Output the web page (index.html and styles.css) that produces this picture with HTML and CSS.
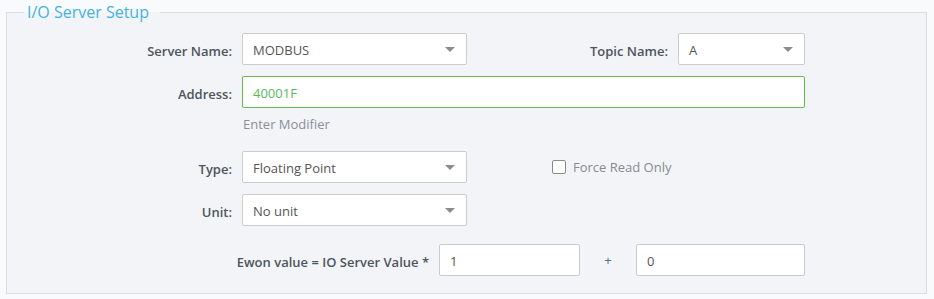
FILE: index.html
```html
<!DOCTYPE html>
<html lang="en">
<head>
    <meta charset="UTF-8">
    <meta name="viewport" content="width=device-width, initial-scale=1.0">
    <title>I/O Server Setup</title>
    <link rel="stylesheet" href="styles.css">
</head>
<body>
    <fieldset class="panel">
        <legend>I/O Server Setup</legend>

        <div class="form-grid">
            <!-- Server / topic -->
            <label class="form-label">Server Name:</label>
            <div class="select">MODBUS<span class="caret"></span></div>
            <label class="form-label">Topic Name:</label>
            <div class="select">A<span class="caret"></span></div>

            <!-- Address -->
            <label class="form-label">Address:</label>
            <div class="text-input valid wide">40001F</div>

            <div></div>
            <div class="help wide">Enter Modifier</div>

            <!-- Type / unit -->
            <label class="form-label">Type:</label>
            <div class="select">Floating Point<span class="caret"></span></div>
            <label class="check">
                <span class="check-box"></span>
                Force Read Only
            </label>

            <label class="form-label">Unit:</label>
            <div class="select">No unit<span class="caret"></span></div>
        </div>

        <div class="scale-row">
            <label class="form-label">Ewon value = IO Server Value *</label>
            <div class="text-input factor">1</div>
            <span class="plus">+</span>
            <div class="text-input offset">0</div>
        </div>
    </fieldset>
</body>
</html>
```

FILE: styles.css
```css
body {
    margin: 0;
    background: #f9fafb;
    font-family: "Open Sans", Arial, sans-serif;
    font-size: 13px;
    color: #555;
}
.panel {
    margin: 0 7px 0 6px;
    padding: 9px 0 17px 0;
    background: #f3f4f8;
    border: 1px solid #dcdde2;
    min-width: 0;
}
.panel legend {
    margin-left: 17px;
    padding: 0 11px 0 3px;
    font-size: 16px;
    line-height: 24px;
    color: #41b3e0;
}
.form-grid {
    display: grid;
    grid-template-columns: 225px 225px 1fr 127px;
    grid-template-rows: 32px 32px 21px 32px 32px;
    column-gap: 10px;
    row-gap: 11px;
    padding-right: 121px;
}
.form-label {
    font-weight: 600;
    color: #4e545c;
    text-align: right;
    align-self: center;
    padding-top: 3px;
}
.select,
.text-input {
    position: relative;
    box-sizing: border-box;
    height: 32px;
    line-height: 33px;
    padding: 0 10px;
    background: #fff;
    border: 1px solid #ccc;
    border-radius: 2px;
    color: #555;
}
.caret {
    position: absolute;
    right: 11px;
    top: 13px;
    width: 0;
    height: 0;
    border-left: 5px solid transparent;
    border-right: 5px solid transparent;
    border-top: 5px solid #8c8c8c;
}
.wide {
    grid-column: 2 / 5;
}
.valid {
    border-color: #62bd4f;
    color: #5cb85c;
}
.help {
    margin-top: -4px;
    line-height: 18px;
    padding-left: 1px;
    color: #8a8f96;
}
.check {
    grid-column: 3 / 5;
    display: flex;
    align-items: center;
    gap: 7px;
    padding-left: 75px;
    color: #8a8a8a;
}
.check-box {
    box-sizing: border-box;
    width: 14px;
    height: 14px;
    border: 1.5px solid #8a8a8a;
    border-radius: 2px;
    background: #fff;
}
.scale-row {
    display: flex;
    justify-content: flex-end;
    align-items: center;
    margin-top: 18px;
    padding-right: 121px;
}
.scale-row .form-label {
    margin-right: 10px;
}
.factor {
    width: 141px;
}
.offset {
    width: 169px;
}
.plus {
    width: 56px;
    text-align: center;
    color: #4e6c8c;
}
```
